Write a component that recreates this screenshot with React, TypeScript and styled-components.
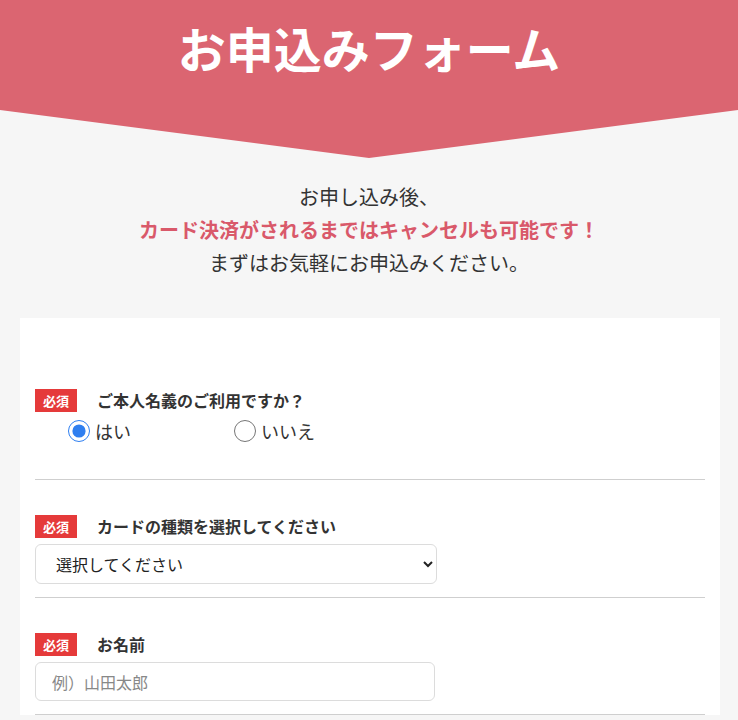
import React from 'react'
import styled, { createGlobalStyle } from 'styled-components'

const GlobalStyle = createGlobalStyle`
  body {
    margin: 0;
    background: #f6f6f6;
    font-family: "Noto Sans CJK JP", "Noto Sans", sans-serif;
    color: #333;
  }
`

const Page = styled.div`
  min-height: 720px;
`

const Hero = styled.header`
  height: 158px;
  background: #db6571;
  clip-path: polygon(0 0, 100% 0, 100% 110px, 50% 100%, 0 110px);
  padding-top: 18px;
  box-sizing: border-box;
  text-align: center;
`

const HeroTitle = styled.h1`
  margin: 0;
  color: #fff;
  font-size: 48px;
  font-weight: 700;
  line-height: 58px;
`

const Intro = styled.div`
  padding-top: 22px;
  text-align: center;
  font-size: 20px;
  line-height: 33px;
  color: #333;

  p {
    margin: 0;
  }
`

const Highlight = styled.p`
  color: #d9596a;
  font-weight: 700;
`

const Card = styled.form`
  width: 700px;
  margin: 39px 0 0 20px;
  background: #fff;
  padding: 36px 15px 0;
  box-sizing: border-box;
`

const Field = styled.div<{ $bottom?: number }>`
  padding: 34px 0 ${({ $bottom }) => $bottom ?? 13}px;
  border-bottom: 1px solid #cfcfcf;
`

const LabelRow = styled.div`
  display: flex;
  align-items: center;
  gap: 20px;
  margin-bottom: 6px;
`

const Required = styled.span`
  display: inline-flex;
  align-items: center;
  justify-content: center;
  width: 42px;
  height: 23px;
  background: #e53a3a;
  color: #fff;
  font-size: 13px;
  font-weight: 700;
`

const LabelText = styled.label`
  font-size: 16px;
  font-weight: 700;
  color: #333;
`

const RadioGroup = styled.div`
  display: flex;
  padding-left: 33px;
  margin-bottom: 35px;
`

const RadioOption = styled.label`
  display: flex;
  align-items: center;
  gap: 5px;
  width: 166px;
  font-size: 18px;
  color: #333;

  input {
    width: 22px;
    height: 22px;
    margin: 0;
    accent-color: #2f7ff0;
  }
`

const Select = styled.select`
  width: 402px;
  height: 40px;
  border: 1px solid #dcdcdc;
  border-radius: 6px;
  padding: 0 10px 0 16px;
  font-size: 16px;
  font-family: inherit;
  color: #222;
  background: #fff;
`

const TextInput = styled.input`
  width: 400px;
  height: 39px;
  box-sizing: border-box;
  border: 1px solid #dcdcdc;
  border-radius: 6px;
  padding: 0 16px;
  font-size: 16px;
  font-family: inherit;

  &::placeholder {
    color: #888;
  }
`

const App = () => {
  return (
    <Page>
      <GlobalStyle />
      <Hero>
        <HeroTitle>お申込みフォーム</HeroTitle>
      </Hero>

      <Intro>
        <p>お申し込み後、</p>
        <Highlight>カード決済がされるまではキャンセルも可能です！</Highlight>
        <p>まずはお気軽にお申込みください。</p>
      </Intro>

      <Card>
        <Field $bottom={0}>
          <LabelRow>
            <Required>必須</Required>
            <LabelText>ご本人名義のご利用ですか？</LabelText>
          </LabelRow>
          <RadioGroup>
            <RadioOption>
              <input type="radio" name="owner" defaultChecked />
              はい
            </RadioOption>
            <RadioOption>
              <input type="radio" name="owner" />
              いいえ
            </RadioOption>
          </RadioGroup>
        </Field>

        <Field>
          <LabelRow>
            <Required>必須</Required>
            <LabelText>カードの種類を選択してください</LabelText>
          </LabelRow>
          <Select defaultValue="">
            <option value="">選択してください</option>
            <option value="visa">VISA</option>
            <option value="master">Mastercard</option>
            <option value="jcb">JCB</option>
          </Select>
        </Field>

        <Field>
          <LabelRow>
            <Required>必須</Required>
            <LabelText>お名前</LabelText>
          </LabelRow>
          <TextInput type="text" placeholder="例）山田太郎" />
        </Field>
      </Card>
    </Page>
  )
}

export default App
